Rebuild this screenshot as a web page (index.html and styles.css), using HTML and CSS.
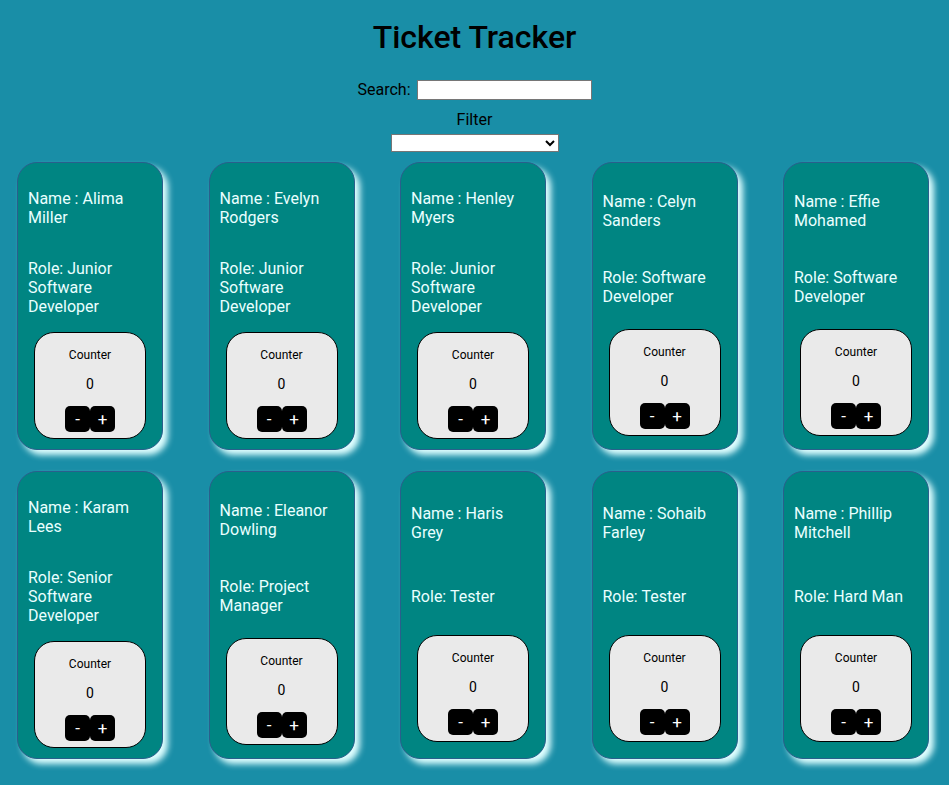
FILE: index.html
```html
<!DOCTYPE html>
<html lang="en">
<head>
<meta charset="utf-8">
<title>Ticket Tracker</title>
<link rel="stylesheet" href="styles.css">
</head>
<body>
<h1 class="title">Ticket Tracker</h1>
<div class="search-row">
  <label class="search-label" for="search">Search:</label>
  <input class="search-input" id="search" type="text">
</div>
<div class="filter">
  <div class="filter-label">Filter</div>
  <select class="filter-select"><option></option></select>
</div>
<div class="cards">
  <div class="card">
    <p class="card-text">Name : Alima Miller</p>
    <p class="card-text">Role: Junior Software Developer</p>
    <div class="counter"><p class="counter-label">Counter</p><p class="counter-value">0</p><div class="counter-buttons"><button class="btn">-</button><button class="btn">+</button></div></div>
  </div>
  <div class="card">
    <p class="card-text">Name : Evelyn Rodgers</p>
    <p class="card-text">Role: Junior Software Developer</p>
    <div class="counter"><p class="counter-label">Counter</p><p class="counter-value">0</p><div class="counter-buttons"><button class="btn">-</button><button class="btn">+</button></div></div>
  </div>
  <div class="card">
    <p class="card-text">Name : Henley Myers</p>
    <p class="card-text">Role: Junior Software Developer</p>
    <div class="counter"><p class="counter-label">Counter</p><p class="counter-value">0</p><div class="counter-buttons"><button class="btn">-</button><button class="btn">+</button></div></div>
  </div>
  <div class="card">
    <p class="card-text">Name : Celyn Sanders</p>
    <p class="card-text">Role: Software Developer</p>
    <div class="counter"><p class="counter-label">Counter</p><p class="counter-value">0</p><div class="counter-buttons"><button class="btn">-</button><button class="btn">+</button></div></div>
  </div>
  <div class="card">
    <p class="card-text">Name : Effie Mohamed</p>
    <p class="card-text">Role: Software Developer</p>
    <div class="counter"><p class="counter-label">Counter</p><p class="counter-value">0</p><div class="counter-buttons"><button class="btn">-</button><button class="btn">+</button></div></div>
  </div>
  <div class="card">
    <p class="card-text">Name : Karam Lees</p>
    <p class="card-text">Role: Senior Software Developer</p>
    <div class="counter"><p class="counter-label">Counter</p><p class="counter-value">0</p><div class="counter-buttons"><button class="btn">-</button><button class="btn">+</button></div></div>
  </div>
  <div class="card">
    <p class="card-text">Name : Eleanor Dowling</p>
    <p class="card-text">Role: Project Manager</p>
    <div class="counter"><p class="counter-label">Counter</p><p class="counter-value">0</p><div class="counter-buttons"><button class="btn">-</button><button class="btn">+</button></div></div>
  </div>
  <div class="card">
    <p class="card-text">Name : Haris Grey</p>
    <p class="card-text">Role: Tester</p>
    <div class="counter"><p class="counter-label">Counter</p><p class="counter-value">0</p><div class="counter-buttons"><button class="btn">-</button><button class="btn">+</button></div></div>
  </div>
  <div class="card">
    <p class="card-text">Name : Sohaib Farley</p>
    <p class="card-text">Role: Tester</p>
    <div class="counter"><p class="counter-label">Counter</p><p class="counter-value">0</p><div class="counter-buttons"><button class="btn">-</button><button class="btn">+</button></div></div>
  </div>
  <div class="card">
    <p class="card-text">Name : Phillip Mitchell</p>
    <p class="card-text">Role: Hard Man</p>
    <div class="counter"><p class="counter-label">Counter</p><p class="counter-value">0</p><div class="counter-buttons"><button class="btn">-</button><button class="btn">+</button></div></div>
  </div>
</div>
</body>
</html>
```

FILE: styles.css
```css
body {
  margin: 0;
  background: #198ea7;
  font-family: Roboto, "Liberation Sans", sans-serif;
  color: #000;
}

.title {
  margin: 18px 0 24px;
  font-size: 32px;
  line-height: 38px;
  font-weight: 500;
  text-align: center;
}

.search-row {
  display: flex;
  justify-content: center;
  align-items: center;
  gap: 6px;
  height: 20px;
  font-size: 16px;
  line-height: 19px;
}

.search-label {
  padding-bottom: 2px;
}

.search-input {
  width: 175px;
  height: 20px;
  box-sizing: border-box;
  margin: 0;
  padding: 1px 2px;
  border: 1px solid #767676;
  background: #fff;
}

.filter {
  margin-top: 10px;
  text-align: center;
}

.filter-label {
  font-size: 16px;
  line-height: 19px;
}

.filter-select {
  display: block;
  margin: 5px auto 0;
  width: 168px;
  height: 18px;
  box-sizing: border-box;
  border: 1px solid #767676;
  border-radius: 0;
  background: #fff;
  font-size: 13px;
}

.cards {
  display: grid;
  grid-template-columns: repeat(5, 146px);
  column-gap: 45.5px;
  row-gap: 21px;
  padding: 10px 0 30px 17px;
}

.card {
  display: flex;
  flex-direction: column;
  justify-content: space-around;
  box-sizing: border-box;
  padding: 10px;
  border: 1px solid #2a5f8c;
  border-radius: 20px;
  background: #008582;
  box-shadow: 5px 5px 6px #e0ffff;
  color: #eaffff;
}

.card-text {
  margin: 16px 0;
  font-size: 16px;
  line-height: 19px;
}

.counter {
  align-self: center;
  width: 112px;
  box-sizing: border-box;
  padding: 3px 0 6px;
  border: 1px solid #000;
  border-radius: 20px;
  background: #eaeaea;
  color: #000;
  text-align: center;
}

.counter-label {
  margin: 12px 0 14px;
  font-size: 12px;
  line-height: 14px;
}

.counter-value {
  margin: 14px 0;
  font-size: 14px;
  line-height: 16px;
}

.counter-buttons {
  display: flex;
  justify-content: center;
}

.btn {
  width: 25px;
  height: 26px;
  padding: 0;
  border: none;
  border-radius: 5px;
  background: #000;
  color: #fff;
  font-family: inherit;
  font-size: 17px;
  font-weight: 400;
}
```
